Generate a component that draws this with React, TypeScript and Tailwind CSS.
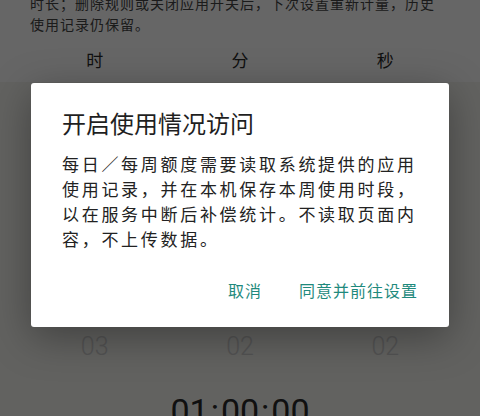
import React from "react";

const cjk = { fontFamily: '"Noto Sans CJK SC", "Noto Sans", sans-serif' };
const num = { fontFamily: 'Roboto, "Noto Sans", sans-serif' };

export default function App() {
  return (
    <div className="relative w-[480px] h-[416px] overflow-hidden bg-[#ffffff]" style={cjk}>
      {/* Underlying page */}
      <div className="flex flex-col">
        <div className="mt-[-7px] px-[30px] text-[14px] leading-[21px] tracking-[1px] text-[#444444]">
          <div className="whitespace-nowrap">时长；删除规则或关闭应用开关后，下次设置重新计量，历史</div>
          <div className="whitespace-nowrap">使用记录仍保留。</div>
        </div>
        <div className="mt-[13px] grid grid-cols-3 px-[22px] text-[17px] leading-[24px] text-[#2a2a2a]">
          <div className="text-center">时</div>
          <div className="text-center">分</div>
          <div className="text-center">秒</div>
        </div>
        <div className="mt-[10px] flex flex-col bg-[#f4f4f0]">
          <div className="h-[250px]" />
          <div className="grid grid-cols-3 px-[22px] text-[25px] leading-[30px] font-light text-[#cfcfcf]" style={num}>
            <div className="text-center">03</div>
            <div className="text-center">02</div>
            <div className="text-center">02</div>
          </div>
          <div className="h-[60px]" />
        </div>
      </div>
      <div className="absolute left-0 right-0 top-[391px] flex justify-center text-[34px] leading-[40px] text-[#2a2a2a]" style={num}>
        <span>01</span>
        <span className="px-[2px]">:</span>
        <span>00</span>
        <span className="px-[2px]">:</span>
        <span>00</span>
      </div>

      {/* Overlay */}
      <div className="absolute inset-0 bg-black/60" />

      {/* Dialog */}
      <div className="absolute left-[31px] top-[83px] w-[418px] h-[244px] bg-white rounded-[3px] shadow-[0_10px_40px_rgba(0,0,0,0.35)] flex flex-col pt-[24px] px-[31px]">
        <div className="text-[24px] leading-[32px] text-[#1f1f1f] whitespace-nowrap">开启使用情况访问</div>
        <div className="mt-[12px] text-[17px] leading-[25px] tracking-[2.7px] text-[#222222]">
          <div className="whitespace-nowrap">每日／每周额度需要读取系统提供的应用</div>
          <div className="whitespace-nowrap">使用记录，并在本机保存本周使用时段，</div>
          <div className="whitespace-nowrap">以在服务中断后补偿统计。不读取页面内</div>
          <div className="whitespace-nowrap">容，不上传数据。</div>
        </div>
        <div className="mt-[27px] flex justify-end gap-[37px] text-[16px] leading-[24px] tracking-[1px] text-[#1f8a7d]">
          <span>取消</span>
          <span>同意并前往设置</span>
        </div>
      </div>
    </div>
  );
}
